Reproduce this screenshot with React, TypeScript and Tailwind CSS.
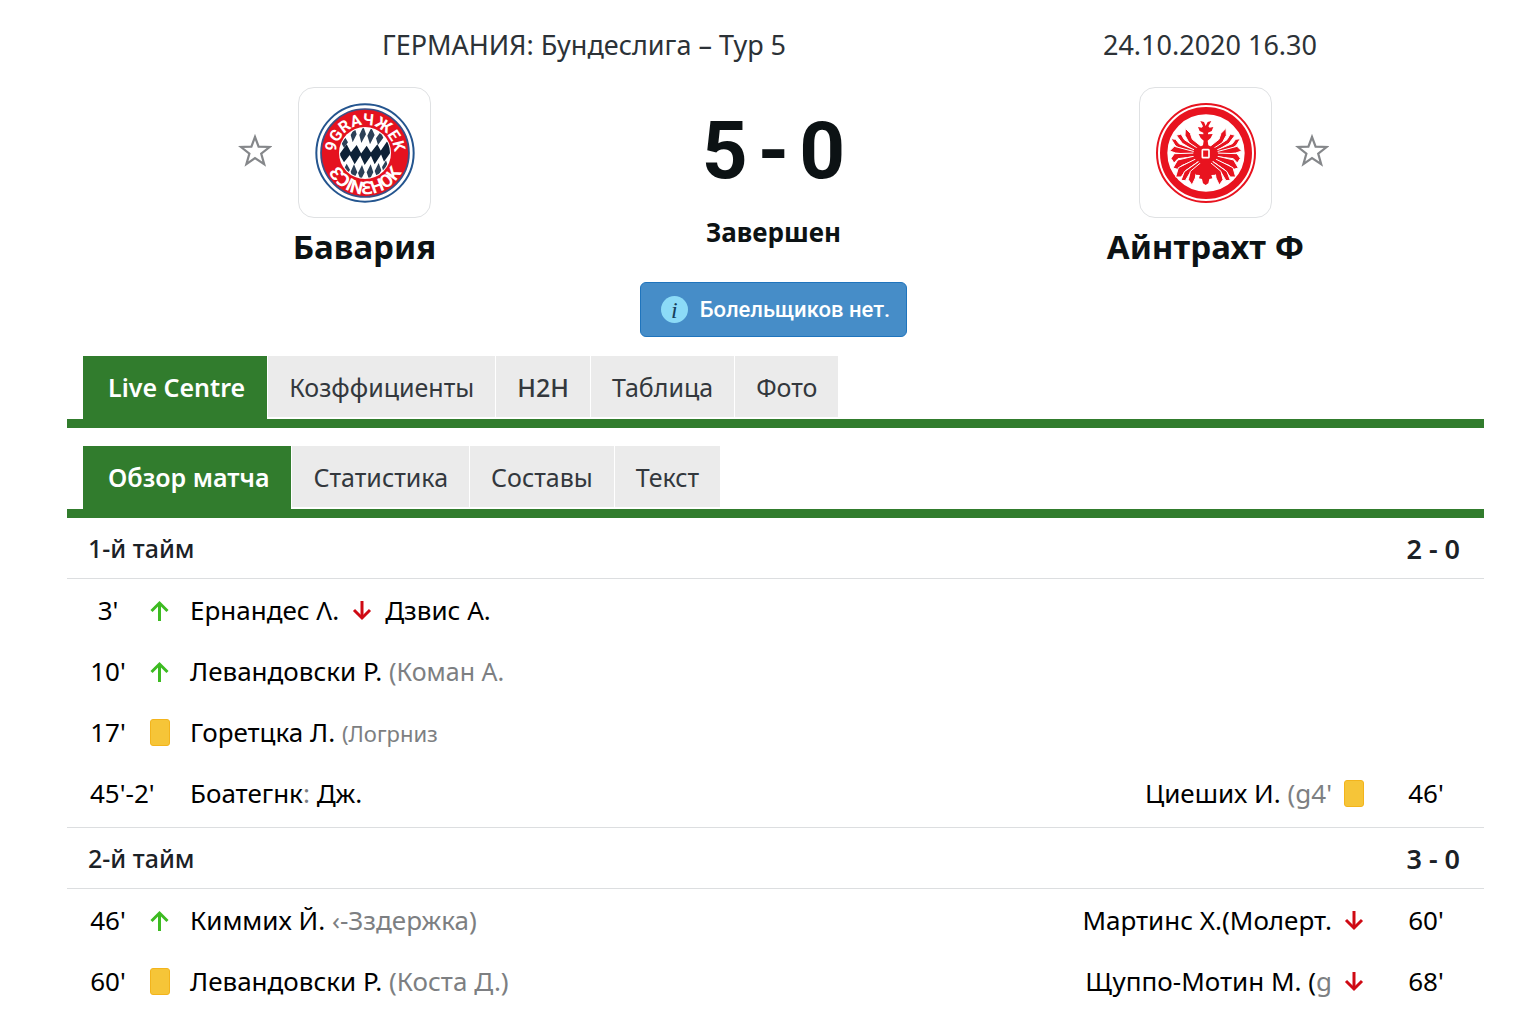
import type { ReactNode } from "react";
import clsx from "clsx";

type EventIcon = "up" | "down" | "card" | null;

interface MatchEvent {
  minute: string;
  icon: EventIcon;
  content: ReactNode;
}

interface Row {
  home?: MatchEvent;
  away?: MatchEvent;
}

interface Half {
  title: string;
  score: string;
  rows: Row[];
}

function ArrowIcon({ direction }: { direction: "up" | "down" }) {
  return direction === "up" ? (
    <svg viewBox="0 0 20 22" className="h-[22px] w-5 shrink-0" fill="none" stroke="#3dbb22" strokeWidth="3">
      <path d="M9.500 21V3" />
      <path d="M1.500 11l8-8 8 8" />
    </svg>
  ) : (
    <svg viewBox="0 0 20 22" className="h-[22px] w-5 shrink-0" fill="none" stroke="#cf0a14" strokeWidth="3">
      <path d="M10 1v17" />
      <path d="M2 10l8 8 8-8" />
    </svg>
  );
}

function Icon({ type }: { type: EventIcon }) {
  if (type === "up" || type === "down") return <ArrowIcon direction={type} />;
  if (type === "card") {
    return <span className="h-[27px] w-5 shrink-0 rounded-[3px] border border-[#f3b41c] bg-[#f6c538]" />;
  }
  return <span className="w-5 shrink-0" />;
}

function Muted({ children }: { children: ReactNode }) {
  return <span className="text-[#7d7f82]">{children}</span>;
}

const halves: Half[] = [
  {
    title: "1-й тайм",
    score: "2 - 0",
    rows: [
      {
        home: {
          minute: "3'",
          icon: "up",
          content: (
            <span className="flex items-center gap-[13px]">
              Ернандес Λ. <ArrowIcon direction="down" /> Дзвис А.
            </span>
          ),
        },
      },
      {
        home: {
          minute: "10'",
          icon: "up",
          content: <>Левандовски Р. <span className="text-[25px] text-[#7d7f82]">(Коман А.</span></>,
        },
      },
      {
        home: {
          minute: "17'",
          icon: "card",
          content: <>Горетцка Л. <span className="text-[22px] text-[#7d7f82]">(Логрниз</span></>,
        },
      },
      {
        home: { minute: "45'-2'", icon: null, content: <>Боатегнк<Muted>:</Muted> Дж.</> },
        away: { minute: "46'", icon: "card", content: <>Циеших И. <Muted>(g4'</Muted></> },
      },
    ],
  },
  {
    title: "2-й тайм",
    score: "3 - 0",
    rows: [
      {
        home: { minute: "46'", icon: "up", content: <>Киммих Й. <Muted>‹-Зздержка)</Muted></> },
        away: { minute: "60'", icon: "down", content: <>Мартинс Х.(Молерт.</> },
      },
      {
        home: { minute: "60'", icon: "card", content: <>Левандовски Р. <Muted>(Коста Д.)</Muted></> },
        away: { minute: "68'", icon: "down", content: <>Щуппо-Мотин М. (<Muted>g</Muted></> },
      },
    ],
  },
];

function StarButton({ label }: { label: string }) {
  return (
    <button type="button" aria-label={label} className="mt-[46px] shrink-0">
      <svg viewBox="0 0 34 34" className="h-[34px] w-[34px]" fill="none" stroke="#85878a" strokeWidth="2.2">
        <path d="M17 4l3.600 9.600 11 .4-8.400 6.600 3 10.600L17 25.200 8.400 31.200l3-10.600L3 14l10.400-.4z" />
      </svg>
    </button>
  );
}

function BayernLogo() {
  return (
    <svg viewBox="283 96 300 300" className="h-[100px] w-[100px]">
      <circle cx="433" cy="246" r="146" fill="#fff" stroke="#24558f" strokeWidth="6" />
      <circle cx="433" cy="246" r="132" fill="#e5121f" stroke="#3a4f86" strokeWidth="5" />
      <circle cx="433" cy="246" r="78" fill="#fff" />
      <clipPath id="bayern-inner">
        <circle cx="433" cy="246" r="75" />
      </clipPath>
      <g clipPath="url(#bayern-inner)">
        <g fill="#2c4057">
          <path d="M402 170l-12 22 6 22 12-24zM428 166l-12 26 6 24 14-26zM452 170l-12 24 8 26 14-28zM480 182l-14 20 6 20 16-22z" />
          <path d="M374 200l-12 16 8 14 12-16z" />
          <path d="M378 278l-10 20 8 20 12-22zM400 280l-10 22 8 24 12-22zM424 282l-12 24 8 22 12-24zM450 280l-12 24 8 24 12-24zM474 276l-12 24 8 22 12-24zM496 268l-12 20 6 20 12-22z" />
        </g>
        <g fill="#0d2137">
          <path d="M378 220l-22 30 14 24 22-28zM408 222l-22 28 16 30 20-32zM438 224l-20 28 14 30 22-32zM470 220l-22 28 14 32 22-34zM500 210l-22 32 12 30 24-34z" />
        </g>
      </g>
      <path id="bayern-top" d="M345 250a88 88 0 1 1 176 0" fill="none" />
      <path id="bayern-bottom" d="M309 246a124 124 0 0 0 248 0" fill="none" />
      <g
        fill="#fff"
        fontFamily="Roboto, 'Noto Sans', sans-serif"
        fontWeight="700"
        fontSize="48"
        textAnchor="middle"
      >
        <text>
          <textPath href="#bayern-top" startOffset="50%">9GRAЧЖEK</textPath>
        </text>
        <text fontSize="54">
          <textPath href="#bayern-bottom" startOffset="50%">ԐƆINƐHOK</textPath>
        </text>
      </g>
    </svg>
  );
}

function EintrachtWing() {
  return (
    <g stroke="#fff" strokeWidth="3">
      <path d="M316 174l15 15 6 18 28 22-12 10-26-22-12-22z" />
      <path d="M289 195l14-4 10 17 40 26-6 9-40-24z" />
      <path d="M273 205l14 2 10 13 50 20-2 9-52-18-8-6z" />
      <path d="M269 242l14-14 64 17v9l-60-6z" />
      <path d="M273 264l10-14 65-2 2 10-56 7-12 13z" />
      <path d="M279 293l14-24 60-14 4 10-50 20-14 12z" />
      <path d="M287 320l8-28 60-30 5 8-42 30-15 20z" />
      <path d="M303 330l10-26 48-34 6 8-37 29-14 24z" />
      <path d="M336 344l-11-16 6-25 36-30 8 8-26 22-3 20z" />
    </g>
  );
}

function EintrachtLogo() {
  return (
    <svg viewBox="228 98 300 300" className="h-[100px] w-[100px]" fill="#e8131f">
      <circle cx="378" cy="248" r="147" fill="#fff" stroke="#e8131f" strokeWidth="6" />
      <circle cx="378" cy="248" r="127" fill="none" stroke="#e8131f" strokeWidth="22" />
      <EintrachtWing />
      <g transform="translate(754 0) scale(-1 1)">
        <EintrachtWing />
      </g>
      <path d="M361 152l11 3 5 12 6-12 11-3-9 16 4 4 11-2-5 12-11 5v5l14-1-6 12-9 8 2 14 12 6 14 2 4 22-8 14-12 6-5 10 14 8 8 11-6 9-12 1 3 10-9 2-3 13-8 5-8-5-3-13-9-2 3-10-12-1-6-9 8-11 14-8-5-10-12-6-8-14 4-22 14-2 12-6 2-14-9-8-6-12 14 1v-5l-11-5-5-12 11 2 4-4z" />
      <rect x="367" y="238" width="20" height="24" rx="2" fill="#e8131f" stroke="#fff" strokeWidth="5" />
    </svg>
  );
}

function Team({ name, logo }: { name: string; logo: ReactNode }) {
  return (
    <div className="flex w-[133px] flex-col items-center">
      <div className="flex h-[131px] w-full items-center justify-center rounded-2xl border border-[#dfe1e3]">{logo}</div>
      <h2 className="mt-2 text-[33px] leading-[42px] font-bold whitespace-nowrap">{name}</h2>
    </div>
  );
}

function Tabs({ items, className }: { items: string[]; className?: string }) {
  return (
    <nav className={clsx("flex gap-px border-b-[9px] border-[#317c2d] pl-4", className)}>
      {items.map((item, i) => (
        <button
          key={item}
          type="button"
          className={clsx(
            "text-[25px] leading-9 whitespace-nowrap",
            i === 0
              ? "bg-[#317c2d] pt-[13px] pr-[22px] pb-[14px] pl-[25px] font-semibold text-white"
              : "mb-0.5 bg-[#ebebeb] px-[21px] pt-[13px] pb-3 text-[#33383d]",
            item === "H2H" && "font-medium"
          )}
        >
          {item}
        </button>
      ))}
    </nav>
  );
}

function EventRow({ home, away }: Row) {
  return (
    <li className="flex h-[61px] items-center justify-between pr-10 pl-[23px] text-[26px] whitespace-nowrap">
      {home && (
        <div className="flex items-center">
          <span className="flex w-9 justify-center">
            <span className={clsx(home.icon === null && "w-9")}>{home.minute}</span>
          </span>
          <span className="mr-5 ml-6 flex">
            <Icon type={home.icon} />
          </span>
          <span>{home.content}</span>
        </div>
      )}
      {away && (
        <div className="flex items-center">
          <span>{away.content}</span>
          <span className="mr-11 ml-3 flex">
            <Icon type={away.icon} />
          </span>
          <span className="w-9 text-center">{away.minute}</span>
        </div>
      )}
    </li>
  );
}

export default function App() {
  return (
    <main className="min-h-screen bg-white pt-[27px] pr-[52px] pl-[67px] font-['Noto_Sans','Liberation_Sans',sans-serif] text-[#0c1214]">
      <header className="pr-1">
        <div className="flex justify-between pr-[163px] pl-[315px] text-[27px] leading-9 text-[#2c3237]">
          <p>ГЕРМАНИЯ: Бундеслига – Тур 5</p>
          <p>24.10.2020 16.30</p>
        </div>

        <div className="mt-6 grid grid-cols-[1fr_auto_1fr]">
          <div className="flex items-start gap-[26px] pl-[171px]">
            <StarButton label="Добавить Бавария в избранное" />
            <Team name="Бавария" logo={<BayernLogo />} />
          </div>

          <div className="flex flex-col items-center">
            <p className="mt-[18px] flex gap-2.5 font-[Roboto,sans-serif] text-[80px] leading-[92px] font-bold">
              <span>5</span>
              <span>-</span>
              <span>0</span>
            </p>
            <p className="mt-[17px] text-[26px] leading-9 font-bold">Завершен</p>
            <div className="mt-8 flex h-[55px] items-center gap-3 rounded-md border border-[#1f74bd] bg-[#468dc8] pr-4 pl-5 text-white">
              <span className="flex h-[27px] w-[27px] items-center justify-center rounded-full bg-[#8cdbf7] font-['Liberation_Serif',serif] text-2xl leading-none text-[#17405c] italic">
                i
              </span>
              <span className="font-[Roboto,sans-serif] text-[22px] font-medium whitespace-nowrap">Болельщиков нет.</span>
            </div>
          </div>

          <div className="flex items-start justify-end gap-[23px] pr-[151px]">
            <Team name="Айнтрахт Ф" logo={<EintrachtLogo />} />
            <StarButton label="Добавить Айнтрахт Ф в избранное" />
          </div>
        </div>
      </header>

      <Tabs className="mt-[19px]" items={["Live Centre", "Козффициенты", "H2H", "Таблица", "Фото"]} />
      <Tabs className="mt-[18px]" items={["Обзор матча", "Статистика", "Составы", "Текст"]} />

      {halves.map((half, i) => (
        <section key={half.title} className={clsx(i > 0 && "border-t border-[#dcdee0]")}>
          <div className="flex h-[61px] items-center justify-between border-b border-[#dcdee0] pt-0.5 pr-6 pl-[21px] font-medium text-[#1b2126]">
            <h3 className="text-[25px]">{half.title}</h3>
            <span className="text-[27px] font-semibold">{half.score}</span>
          </div>
          <ul className="pt-px pb-[3px] text-black">
            {half.rows.map((row, j) => (
              <EventRow key={j} {...row} />
            ))}
          </ul>
        </section>
      ))}
    </main>
  );
}
